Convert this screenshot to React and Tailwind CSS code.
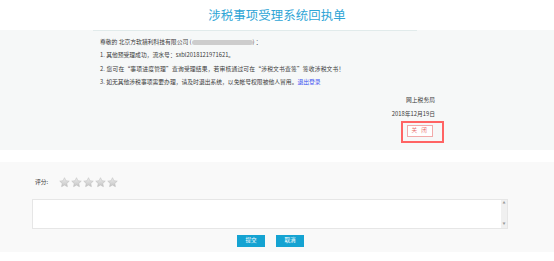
import React from "react";

function Star() {
  return (
    <svg width="11" height="11" viewBox="0 0 24 24" className="block">
      <defs>
        <linearGradient id="sg" x1="0" y1="0" x2="0" y2="1">
          <stop offset="0" stopColor="#eeeeee" />
          <stop offset="1" stopColor="#c4c4c4" />
        </linearGradient>
      </defs>
      <path
        d="M12 1.5l3.1 6.6 7.2.9-5.3 5 1.4 7.1L12 17.6l-6.4 3.5 1.4-7.1-5.3-5 7.2-.9z"
        fill="url(#sg)"
        stroke="#bdbdbd"
        strokeWidth="1.2"
        strokeLinejoin="round"
      />
    </svg>
  );
}

export default function App() {
  return (
    <div className="w-[554px] h-[261px] bg-white text-[#3a3a3a] font-['Noto_Sans_CJK_SC','Liberation_Sans',sans-serif] overflow-hidden">
      {/* header */}
      <div className="h-[30px] flex items-center justify-center">
        <h1 className="text-[12.4px] leading-none text-[#2ea5d6] tracking-[0.1px]">
          涉税事项受理系统回执单
        </h1>
      </div>

      {/* receipt body */}
      <div className="h-[120px] bg-[#f6f8f8]">
        <div className="ml-[93px] w-[324px] h-px bg-[#e1ebeb]" />
        <div className="pl-[100px] pt-[4px] text-[5.8px] leading-[13.33px] whitespace-nowrap">
          <div>
            尊敬的 北京方软猎利科技有限公司 (
            <span className="inline-block align-middle w-[61px] h-[5px] rounded-full bg-[#cdcdcd] blur-[0.4px]" />
            ) ：
          </div>
          <div>1. 其他预受理成功，流水号：sxbl2018121971621。</div>
          <div className="tracking-[0.15px]">2. 您可在“事项进度管理”查询受理结果，若审核通过可在“涉税文书查签”签收涉税文书！</div>
          <div>
            3. 如无其他涉税事项需要办理，请及时退出系统，以免帐号权限被他人冒用。
            <span className="text-[#3d4ff0]">退出登录</span>
          </div>
        </div>
        <div className="flex flex-col items-end pr-[119px] pt-[5px] text-[5.8px] leading-[13.33px] whitespace-nowrap">
          <div>网上税务局</div>
          <div>2018年12月19日</div>
          <div className="relative mt-[5px] mr-[2px]">
            <button className="w-[26px] h-[12px] border border-[#f2aaaa] bg-white text-[#e86a6a] text-[5.6px] leading-none tracking-[1.5px] flex items-center justify-center">
              关 闭
            </button>
            <div className="absolute left-[-6px] top-[-4px] w-[43px] h-[22px] border-2 border-[#ff6464]" />
          </div>
        </div>
      </div>

      <div className="h-[12px] bg-white" />

      {/* rating section */}
      <div className="h-[90px] bg-[#f9f9f9] pt-[14px]">
        <div className="flex items-center pl-[35px] h-[12px]">
          <span className="text-[5.8px] w-[24px]">评分:</span>
          <div className="flex gap-[1px]">
            <Star />
            <Star />
            <Star />
            <Star />
            <Star />
          </div>
        </div>
        <div className="ml-[32px] mt-[11px] w-[476px] h-[30px] bg-white border border-[#e6e6e6] flex justify-end">
          <div className="w-[6px] h-full bg-[#f0f0f0] flex flex-col items-center justify-between py-[2px] text-[3px] text-[#999] leading-none">
            <span>▲</span>
            <span>▼</span>
          </div>
        </div>
        <div className="flex justify-center gap-[11px] mt-[6px] pr-[13px]">
          <button className="w-[28px] h-[12px] bg-[#15a3d2] text-white text-[5.6px] leading-none">
            提交
          </button>
          <button className="w-[28px] h-[12px] bg-[#15a3d2] text-white text-[5.6px] leading-none">
            取消
          </button>
        </div>
      </div>
    </div>
  );
}
